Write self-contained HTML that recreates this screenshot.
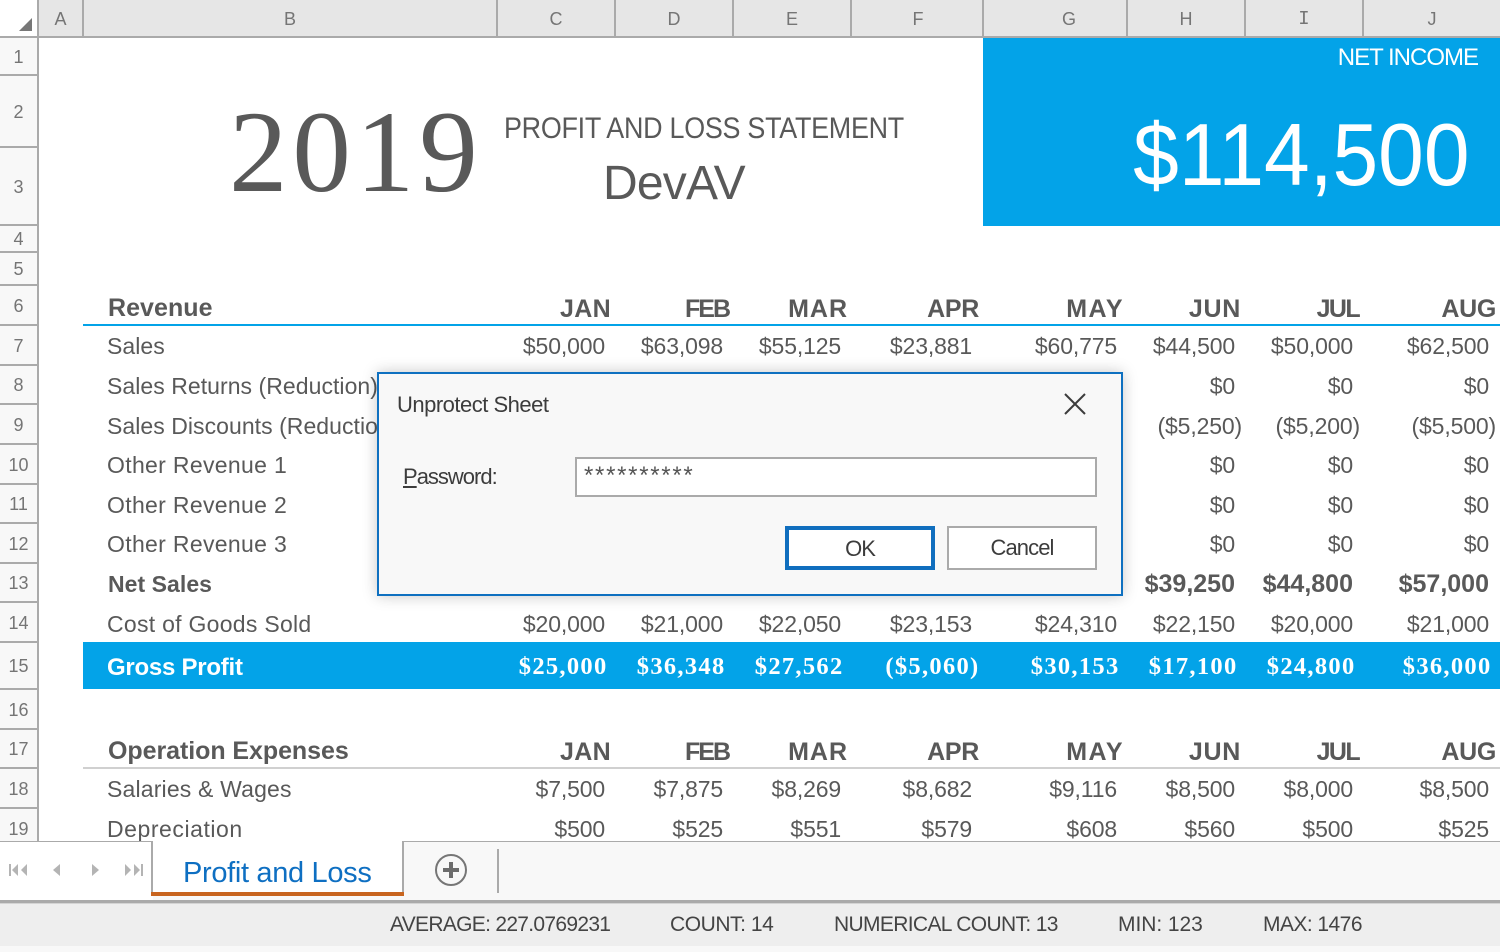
<!DOCTYPE html>
<html><head><meta charset="utf-8"><style>
html,body{margin:0;padding:0;width:1500px;height:952px;overflow:hidden;background:#fff}
body{position:relative;font-family:"Liberation Sans",sans-serif;color:#595959}
div,span,svg{position:absolute}
span,.t{white-space:nowrap}
.ch{top:0;height:36px;background:#e6e6e6;border-right:2px solid #aaa;box-sizing:border-box;text-align:center;line-height:38px;font-size:18px;color:#757575}
.rh{left:0;width:37px;background:#f8f8f8;border-bottom:2px solid #aaa;box-sizing:border-box;text-align:center;font-size:18px;color:#757575;display:flex;align-items:center;justify-content:center;padding-top:2px}
.r{left:0;width:1500px;height:40px;line-height:40px;font-size:23px;letter-spacing:-.15px}
.r span{top:0}
.l{left:107px;letter-spacing:.05px}
.c{right:895px}.d{right:777px}.e{right:659px}.f{right:528px}.g{right:383px}.h{right:265px}.i{right:147px}.j{right:11px}
.h.p{right:258px}.i.p{right:140px}.j.p{right:4px}
.hd{font-weight:bold;font-size:25px;letter-spacing:-.3px}
.r.hd span{top:1px}
.r.hd span.l{top:0;left:108px;font-size:25px;letter-spacing:.05px}
.r.hd span.l2{letter-spacing:-.06px}
.hd .c{right:889px;letter-spacing:.35px}.hd .d{right:771px;letter-spacing:-2px}.hd .e{right:652px;letter-spacing:1px}.hd .f{right:521px}.hd .g{right:376px;letter-spacing:1.5px}.hd .h{right:259px;letter-spacing:.7px}.hd .i{right:141px;letter-spacing:-1.6px}.hd .j{right:4px}
.b{font-weight:bold}
.b span{font-size:25px;letter-spacing:0}
.r.b span.l{font-size:23px;letter-spacing:.05px;left:108px}
.gp{font-family:"Liberation Serif",serif;font-weight:bold;color:#fff;font-size:24.5px;letter-spacing:1.3px}
.r.gp span.l{font-family:"Liberation Sans",sans-serif;font-size:24px;left:107px;letter-spacing:-.25px;top:1px}
.gp .c{right:892.5px}.gp .d{right:774.5px}.gp .e{right:656.5px}.gp .f{right:520.5px}.gp .g{right:380.5px}.gp .h{right:262.5px}.gp .i{right:144.5px}.gp .j{right:8.5px}
.st{top:912px;font-size:21px;color:#444;line-height:26px}
</style></head><body>
<div style="left:0;top:0;width:37px;height:36px;background:#fff"></div>
<svg style="left:0;top:0" width="38" height="36"><polygon points="32,18 32,31 19,31" fill="#777"/></svg>
<div class="ch" style="left:38px;width:46px;padding-left:1px">A</div>
<div class="ch" style="left:84px;width:414px">B</div>
<div class="ch" style="left:498px;width:118px">C</div>
<div class="ch" style="left:616px;width:118px">D</div>
<div class="ch" style="left:734px;width:118px">E</div>
<div class="ch" style="left:852px;width:132px;padding-left:2px">F</div>
<div class="ch" style="left:984px;width:144px;padding-left:28px">G</div>
<div class="ch" style="left:1128px;width:118px">H</div>
<div class="ch" style="left:1246px;width:118px;font-family:'Liberation Mono',monospace;font-size:19px">I</div>
<div class="ch" style="left:1364px;width:136px;border-right:0">J</div>
<div style="left:0;top:36px;width:1500px;height:2px;background:#aaa"></div>
<div style="left:37px;top:0;width:2px;height:841px;background:#aaa"></div>

<div class="rh" style="top:38px;height:38px">1</div>
<div class="rh" style="top:76px;height:72px">2</div>
<div class="rh" style="top:148px;height:78px">3</div>
<div class="rh" style="top:226px;height:27px">4</div>
<div class="rh" style="top:253px;height:33px">5</div>
<div class="rh" style="top:286px;height:40px">6</div>
<div class="rh" style="top:326px;height:40px">7</div>
<div class="rh" style="top:366px;height:39px">8</div>
<div class="rh" style="top:405px;height:40px">9</div>
<div class="rh" style="top:445px;height:40px">10</div>
<div class="rh" style="top:485px;height:39px">11</div>
<div class="rh" style="top:524px;height:40px">12</div>
<div class="rh" style="top:564px;height:39px">13</div>
<div class="rh" style="top:603px;height:40px">14</div>
<div class="rh" style="top:643px;height:47px">15</div>
<div class="rh" style="top:690px;height:40px">16</div>
<div class="rh" style="top:730px;height:39px">17</div>
<div class="rh" style="top:769px;height:40px">18</div>
<div class="rh" style="top:809px;height:40px">19</div>

<span style="left:229px;top:93px;font-family:'Liberation Serif',serif;font-size:117px;line-height:120px;letter-spacing:4.9px">2019</span>
<span style="left:504px;top:110px;font-size:30px;line-height:38px;letter-spacing:-.3px;transform:scaleX(.897);transform-origin:left center">PROFIT AND LOSS STATEMENT</span>
<span style="left:603px;top:156px;font-size:48px;line-height:56px;letter-spacing:-.8px">DevAV</span>

<div style="left:983px;top:38px;width:517px;height:188px;background:#03a3e8"></div>
<span style="right:22px;top:43px;font-size:24px;line-height:30px;color:#fff;letter-spacing:-1px">NET INCOME</span>
<span style="right:30px;top:105px;font-size:88px;line-height:100px;color:#fff;transform:scaleX(.933);transform-origin:right center">$114,500</span>

<div class="r hd" style="top:288px"><span class="l">Revenue</span><span class="c">JAN</span><span class="d">FEB</span><span class="e">MAR</span><span class="f">APR</span><span class="g">MAY</span><span class="h">JUN</span><span class="i">JUL</span><span class="j">AUG</span></div>
<div style="left:83px;top:324px;width:1417px;height:2px;background:#03a3e8"></div>

<div class="r" style="top:326px"><span class="l">Sales</span><span class="c">$50,000</span><span class="d">$63,098</span><span class="e">$55,125</span><span class="f">$23,881</span><span class="g">$60,775</span><span class="h">$44,500</span><span class="i">$50,000</span><span class="j">$62,500</span></div>
<div class="r" style="top:366px"><span class="l">Sales Returns (Reduction)</span><span class="h">$0</span><span class="i">$0</span><span class="j">$0</span></div>
<div class="r" style="top:406px"><span class="l">Sales Discounts (Reduction)</span><span class="h p">($5,250)</span><span class="i p">($5,200)</span><span class="j p">($5,500)</span></div>
<div class="r" style="top:445px"><span class="l" style="letter-spacing:.33px">Other Revenue 1</span><span class="h">$0</span><span class="i">$0</span><span class="j">$0</span></div>
<div class="r" style="top:485px"><span class="l" style="letter-spacing:.33px">Other Revenue 2</span><span class="h">$0</span><span class="i">$0</span><span class="j">$0</span></div>
<div class="r" style="top:524px"><span class="l" style="letter-spacing:.33px">Other Revenue 3</span><span class="h">$0</span><span class="i">$0</span><span class="j">$0</span></div>
<div class="r b" style="top:564px"><span class="l">Net Sales</span><span class="h">$39,250</span><span class="i">$44,800</span><span class="j">$57,000</span></div>
<div class="r" style="top:604px"><span class="l" style="letter-spacing:.28px">Cost of Goods Sold</span><span class="c">$20,000</span><span class="d">$21,000</span><span class="e">$22,050</span><span class="f">$23,153</span><span class="g">$24,310</span><span class="h">$22,150</span><span class="i">$20,000</span><span class="j">$21,000</span></div>

<div style="left:83px;top:642px;width:1417px;height:47px;background:#03a3e8"></div>
<div class="r gp" style="top:647px"><span class="l">Gross Profit</span><span class="c">$25,000</span><span class="d">$36,348</span><span class="e">$27,562</span><span class="f">($5,060)</span><span class="g">$30,153</span><span class="h">$17,100</span><span class="i">$24,800</span><span class="j">$36,000</span></div>

<div class="r hd" style="top:731px"><span class="l l2">Operation Expenses</span><span class="c">JAN</span><span class="d">FEB</span><span class="e">MAR</span><span class="f">APR</span><span class="g">MAY</span><span class="h">JUN</span><span class="i">JUL</span><span class="j">AUG</span></div>
<div style="left:83px;top:767px;width:1417px;height:2px;background:#d0d0d0"></div>
<div class="r" style="top:769px"><span class="l" style="letter-spacing:.17px">Salaries &amp; Wages</span><span class="c">$7,500</span><span class="d">$7,875</span><span class="e">$8,269</span><span class="f">$8,682</span><span class="g">$9,116</span><span class="h">$8,500</span><span class="i">$8,000</span><span class="j">$8,500</span></div>
<div class="r" style="top:809px"><span class="l" style="letter-spacing:.55px">Depreciation</span><span class="c">$500</span><span class="d">$525</span><span class="e">$551</span><span class="f">$579</span><span class="g">$608</span><span class="h">$560</span><span class="i">$500</span><span class="j">$525</span></div>

<!-- tab bar -->
<div style="left:0;top:841px;width:1500px;height:111px;background:#f8f8f8"></div>
<div style="left:0;top:841px;width:153px;height:59px;background:#fff;border-top:1px solid #aaa;box-sizing:border-box"></div>
<div style="left:403px;top:841px;width:1097px;height:1px;background:#aaa"></div>
<div style="left:151px;top:841px;width:253px;height:53px;background:#fff;border-left:2px solid #aaa;border-right:2px solid #aaa;box-sizing:border-box"></div>
<div style="left:151px;top:892px;width:253px;height:4px;background:#c8641e"></div>
<span style="left:183px;top:854px;font-size:29px;line-height:38px;color:#0e6fc2;letter-spacing:-.33px">Profit and Loss</span>
<svg style="left:0;top:855px" width="150" height="30" fill="#b4b4b4">
<rect x="9" y="9" width="2" height="12"/><polygon points="18,9 18,21 12,15"/><polygon points="27,9 27,21 21,15"/>
<polygon points="60,9 60,21 53,15"/>
<polygon points="92,9 92,21 99,15"/>
<polygon points="125,9 125,21 131,15"/><polygon points="134,9 134,21 140,15"/><rect x="141" y="9" width="2" height="12"/>
</svg>
<svg style="left:432px;top:851px" width="38" height="38"><circle cx="19" cy="19" r="15" fill="none" stroke="#767676" stroke-width="2"/><path d="M19 11v16M11 19h16" stroke="#6c6c6c" stroke-width="4" fill="none"/></svg>
<div style="left:497px;top:849px;width:2px;height:44px;background:#aaa"></div>

<!-- status bar -->
<div style="left:0;top:900px;width:1500px;height:3px;background:#aaa"></div>
<div style="left:0;top:903px;width:1500px;height:1px;background:#d4d4d4"></div>
<div style="left:0;top:904px;width:1500px;height:42px;background:#eeeeee"></div>
<span class="st" style="left:390px;letter-spacing:-.7px">AVERAGE: 227.0769231</span>
<span class="st" style="left:670px;letter-spacing:-.45px">COUNT: 14</span>
<span class="st" style="left:834px;letter-spacing:-.65px">NUMERICAL COUNT: 13</span>
<span class="st" style="left:1118px;letter-spacing:-.05px">MIN: 123</span>
<span class="st" style="left:1263px;letter-spacing:-.55px">MAX: 1476</span>

<!-- dialog -->
<div style="left:377px;top:372px;width:746px;height:224px;box-sizing:border-box;background:#f8f8f8;border:2px solid #0e70c0;box-shadow:0 0 14px rgba(0,0,0,.22)"></div>
<span style="left:397px;top:391px;font-size:22px;line-height:28px;color:#3c3c3c;letter-spacing:-.5px">Unprotect Sheet</span>
<svg style="left:1060px;top:389px" width="30" height="30"><path d="M5 5L25 25M25 5L5 25" stroke="#3c3c3c" stroke-width="2" fill="none"/></svg>
<span style="left:403px;top:463px;font-size:22px;line-height:28px;color:#3c3c3c;letter-spacing:-1px"><u>P</u>assword:</span>
<div style="left:575px;top:457px;width:522px;height:40px;box-sizing:border-box;background:#fff;border:2px solid #aaa"></div>
<span style="left:584px;top:464px;font-size:24px;line-height:24px;color:#555;letter-spacing:1.7px">**********</span>
<div style="left:785px;top:526px;width:150px;height:44px;box-sizing:border-box;background:#fff;border:4px solid #106ebe;text-align:center;line-height:37px;font-size:22px;color:#3c3c3c;letter-spacing:-1px">OK</div>
<div style="left:947px;top:526px;width:150px;height:44px;box-sizing:border-box;background:#fff;border:2px solid #aaa;text-align:center;line-height:40px;font-size:22px;color:#3c3c3c;letter-spacing:-.9px">Cancel</div>
</body></html>
